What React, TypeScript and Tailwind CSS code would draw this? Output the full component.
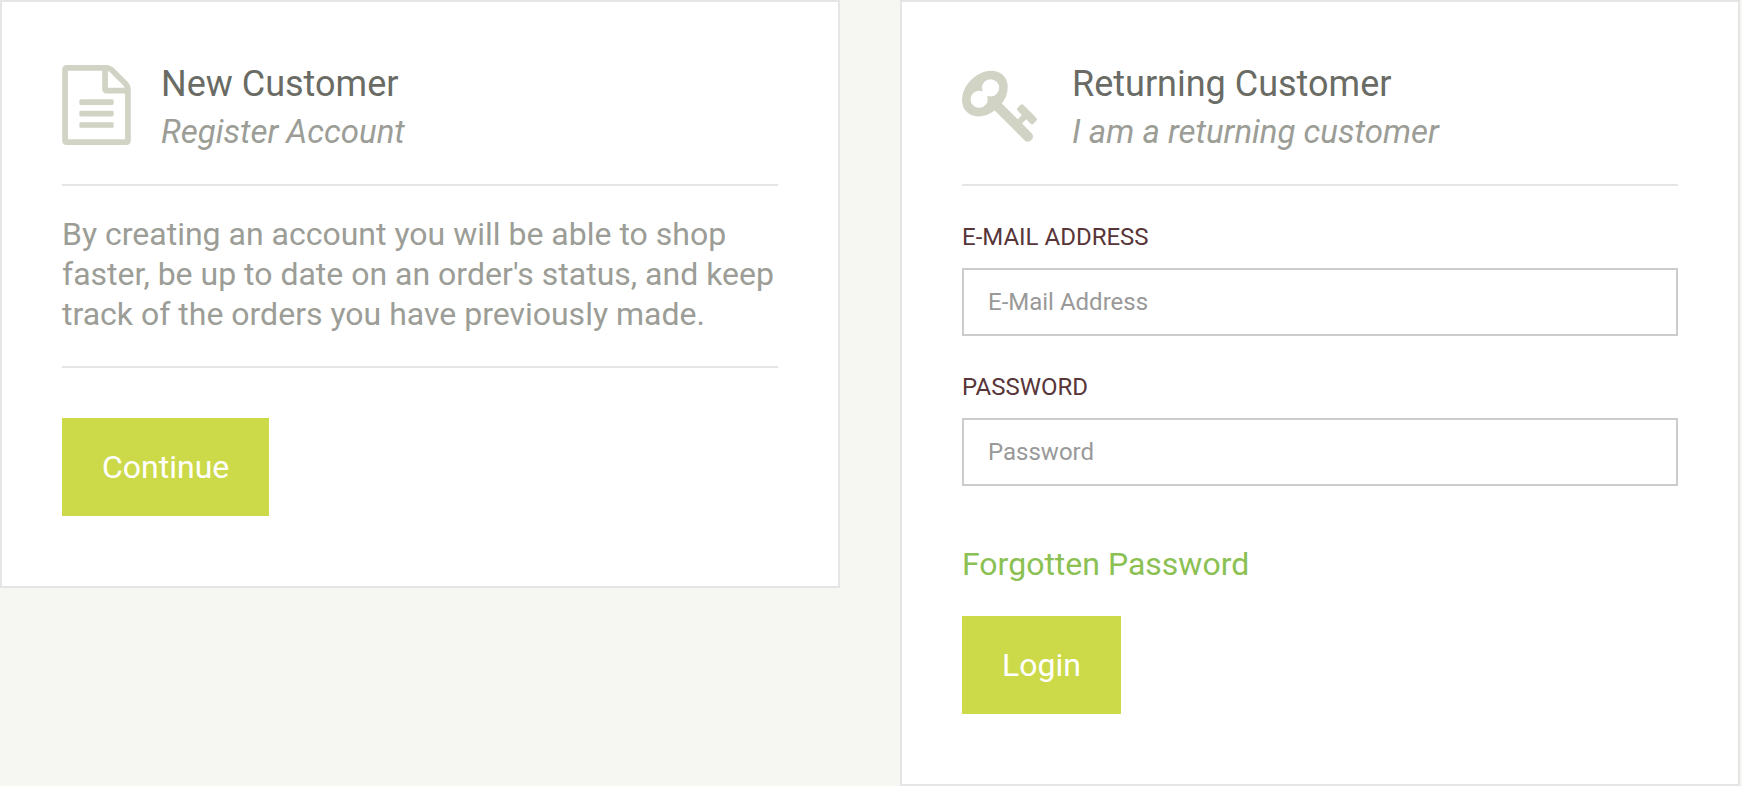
import type { ReactNode } from "react";

function FileTextIcon() {
  return (
    <svg aria-hidden="true" viewBox="128 0 1536 1792" className="h-20 w-[69px] shrink-0 fill-[#d1d4c5]">
      <path d="M1596 380q28 28 48 76t20 88v1152q0 40-28 68t-68 28h-1344q-40 0-68-28t-28-68v-1600q0-40 28-68t68-28h896q40 0 88 20t76 48zm-444-244v376h376q-10-29-22-41l-313-313q-12-12-41-22zm384 1528v-1024h-416q-40 0-68-28t-28-68v-416h-768v1536h1280zm-1024-864q0-14 9-23t23-9h704q14 0 23 9t9 23v64q0 14-9 23t-23 9h-704q-14 0-23-9t-9-23v-64zm736 224q14 0 23 9t9 23v64q0 14-9 23t-23 9h-704q-14 0-23-9t-9-23v-64q0-14 9-23t23-9h704zm0 256q14 0 23 9t9 23v64q0 14-9 23t-23 9h-704q-14 0-23-9t-9-23v-64q0-14 9-23t23-9h704z" />
    </svg>
  );
}

function KeyIcon() {
  return (
    <svg aria-hidden="true" viewBox="0 0 1792 1792" className="size-20 shrink-0 fill-[#d1d4c5]">
      <path d="M832 512q0-80-56-136t-136-56-136 56-56 136q0 42 19 83-41-19-83-19-80 0-136 56t-56 136 56 136 136 56 136-56 56-136q0-42-19-83 41 19 83 19 80 0 136-56t56-136zm851 704q0 17-49 66t-66 49q-9 0-28.5-16t-36.5-33-38.5-40-24.5-26l-96 96 220 220q28 28 28 68 0 42-39 81t-81 39q-40 0-68-28l-671-671q-176 131-365 131-163 0-265.5-102.5t-102.5-265.5q0-160 95-313t248-248 313-95q163 0 265.5 102.5t102.5 265.5q0 189-131 365l355 355 96-96q-3-3-26-24.5t-40-38.5-33-36.5-16-28.5q0-17 49-66t66-49q13 0 23 10 6 6 46 44.5t82 79.5 86.5 86 73 78 28.5 41z" />
    </svg>
  );
}

type CardProps = { icon: ReactNode; title: string; subtitle: string; children: ReactNode };

function Card({ icon, title, subtitle, children }: CardProps) {
  return (
    <section className="min-w-0 flex-1 border-2 border-[#e5e5e5] bg-white px-[60px] pt-[58px] pb-[70px]">
      <header className="flex gap-[30px] border-b-2 border-[#e5e5e5] pb-[30px]">
        <div className="pt-[5px]">{icon}</div>
        <div>
          <h2 className="mb-0.5 text-[36px] leading-[48px] text-[#696b64]">{title}</h2>
          <p className="text-[33px] leading-[44px] text-[#9b9d96] italic">{subtitle}</p>
        </div>
      </header>
      {children}
    </section>
  );
}

function Field({ id, label, type }: { id: string; label: string; type: string }) {
  return (
    <div className="pt-[34px]">
      <label htmlFor={id} className="mb-3.5 block text-[24px] leading-[34px] text-[#583539] uppercase">
        {label}
      </label>
      <input
        id={id}
        type={type}
        placeholder={label}
        className="block h-[68px] w-full border-2 border-[#cccccc] bg-white px-6 text-[24px] text-[#696b64] placeholder:text-[#999999]"
      />
    </div>
  );
}

const buttonClass = "block h-[98px] bg-[#ccda49] px-10 text-[32px] leading-[40px] text-white";

export default function App() {
  return (
    <main className="flex min-h-screen items-start gap-[60px] bg-[#f6f7f2] pr-0.5 font-['Roboto',sans-serif]">
      <Card icon={<FileTextIcon />} title="New Customer" subtitle="Register Account">
        <p className="mb-[50px] border-b-2 border-[#e5e5e5] pt-7 pb-8 text-[32px] leading-[40px] text-[#9b9d96]">
          By creating an account you will be able to shop faster, be up to date on an order's status, and keep
          track of the orders you have previously made.
        </p>
        <button type="button" className={buttonClass}>Continue</button>
      </Card>
      <Card icon={<KeyIcon />} title="Returning Customer" subtitle="I am a returning customer">
        <form onSubmit={(event) => event.preventDefault()}>
          <Field id="email" label="E-Mail Address" type="email" />
          <Field id="password" label="Password" type="password" />
          <a href="#forgotten" className="mt-[58px] mb-8 block w-fit text-[32px] leading-[40px] text-[#8bc053]">
            Forgotten Password
          </a>
          <button type="submit" className={buttonClass}>Login</button>
        </form>
      </Card>
    </main>
  );
}
